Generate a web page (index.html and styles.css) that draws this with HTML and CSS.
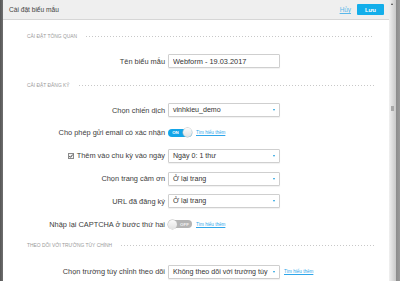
FILE: index.html
```html
<!DOCTYPE html>
<html lang="vi">
  <head>
    <meta charset="UTF-8" />
    <meta name="viewport" content="width=device-width, initial-scale=1.0" />
    <title>Cài đặt biểu mẫu</title>
    <link rel="stylesheet" href="styles.css">
  </head>
  <body>
    <div class="screen">
      <div class="dialog">
        <div class="dialog-header">
          <span class="dialog-title">Cài đặt biểu mẫu</span>
          <a href="#" class="cancel-link">Hủy</a>
          <button class="save-button">Lưu</button>
        </div>

        <div class="dialog-body">
          <div class="section-title first">
            <span>CÀI ĐẶT TỔNG QUAN</span>
            <span class="dots"></span>
          </div>
          <div class="row single">
            <label class="label">Tên biểu mẫu</label>
            <input class="field" value="Webform - 19.03.2017">
          </div>

          <div class="section-title">
            <span>CÀI ĐẶT ĐĂNG KÝ</span>
            <span class="dots"></span>
          </div>
          <div class="rows">
            <div class="row">
              <label class="label">Chọn chiến dịch</label>
              <div class="select">vinhkieu_demo<span class="arrow"></span></div>
            </div>
            <div class="row">
              <label class="label">Cho phép gửi email có xác nhận</label>
              <span class="toggle on"><span class="toggle-text">ON</span><span class="knob"></span></span>
              <a href="#" class="more-link">Tìm hiểu thêm</a>
            </div>
            <div class="row">
              <label class="label">
                <svg class="check" width="6" height="6" viewBox="0 0 6 6">
                  <rect x="0.5" y="0.5" width="5" height="5" fill="#f4f4f4" stroke="#8a8a8a"/>
                  <path d="M1.3 3 L2.5 4.3 L4.8 1.5" fill="none" stroke="#333" stroke-width="0.9"/>
                </svg>
                Thêm vào chu kỳ vào ngày
              </label>
              <div class="select">Ngày 0: 1 thư<span class="arrow"></span></div>
            </div>
            <div class="row">
              <label class="label">Chọn trang cảm ơn</label>
              <div class="select">Ở lại trang<span class="arrow"></span></div>
            </div>
            <div class="row">
              <label class="label">URL đã đăng ký</label>
              <div class="select">Ở lại trang<span class="arrow"></span></div>
            </div>
            <div class="row">
              <label class="label">Nhập lại CAPTCHA ở bước thứ hai</label>
              <span class="toggle off"><span class="knob"></span><span class="toggle-text">OFF</span></span>
              <a href="#" class="more-link">Tìm hiểu thêm</a>
            </div>
          </div>

          <div class="section-title third">
            <span>THEO DÕI VỚI TRƯỜNG TÙY CHỈNH</span>
            <span class="dots"></span>
          </div>
          <div class="row last">
            <label class="label">Chọn trường tùy chỉnh theo dõi</label>
            <div class="select">Không theo dõi với trường tùy<span class="arrow"></span></div>
            <a href="#" class="more-link">Tìm hiểu thêm</a>
          </div>
        </div>
      </div>

      <div class="scrollbar">
        <span class="scroll-arrow"></span>
        <span class="scroll-thumb"></span>
      </div>
    </div>
  </body>
</html>
```

FILE: styles.css
```css
body{
  margin: 0;
  background-color: rgb(110, 110, 110);
  font-family: "Liberation Sans", Arial, sans-serif;
  color: #333;
  overflow: hidden;
}
.screen{
  display: flex;
  height: 281px;
  padding-left: 3px;
  background: linear-gradient(to right, #555 0px, #707070 3px, #8c8c8c 396px, #9a9a9a 400px);
}
.dialog{
  width: 386px;
  background-color: white;
}
.dialog-header{
  display: flex;
  align-items: center;
  height: 19px;
  padding: 0 5px 0 6px;
  background-color: #efefef;
  border-bottom: 1px solid #d6d6d6;
}
.dialog-title{
  flex: 1;
  font-size: 6.6px;
  color: #444;
}
.cancel-link{
  font-size: 6.4px;
  color: #5ab8ea;
  margin-right: 6px;
}
.save-button{
  width: 27px;
  height: 11px;
  padding: 0;
  border: none;
  border-radius: 1px;
  background-color: #13aeea;
  color: white;
  font-family: "Liberation Sans", Arial, sans-serif;
  font-size: 5.6px;
  font-weight: bold;
}
.dialog-body{
  padding: 0 15px 0 24px;
}
.section-title{
  display: flex;
  align-items: center;
  height: 10px;
  margin-top: 8px;
  font-size: 4.9px;
  color: #9a9a9a;
}
.section-title.first{
  margin-top: 11px;
}
.section-title.third{
  margin-top: 5px;
}
.dots{
  flex: 1;
  height: 1px;
  margin-left: 9px;
  background-image: linear-gradient(to right, #c8c8c8 1px, transparent 1px);
  background-size: 3px 1px;
  background-repeat: repeat-x;
}
.rows{
  margin-top: 8px;
}
.row{
  display: flex;
  align-items: center;
  height: 22.8px;
}
.row.single{
  margin-top: 9px;
}
.row.last{
  margin-top: 10px;
}
.label{
  width: 138px;
  margin-right: 3px;
  text-align: right;
  font-size: 7.4px;
  color: #3c3c3c;
  white-space: nowrap;
}
.check{
  vertical-align: -0.5px;
  margin-right: 1px;
}
.field,
.select{
  box-sizing: border-box;
  width: 112px;
  height: 14px;
  padding: 0 0 0 4px;
  border: 1px solid #cfcfcf;
  border-radius: 1px;
  box-shadow: 0 1px 1px rgba(0, 0, 0, 0.06);
  background-color: white;
  font-family: "Liberation Sans", Arial, sans-serif;
  font-size: 7.4px;
  color: #333;
}
.select{
  position: relative;
  display: flex;
  align-items: center;
  padding-right: 10px;
  font-size: 7.1px;
  white-space: nowrap;
  overflow: hidden;
}
.arrow{
  position: absolute;
  right: 4px;
  top: 5px;
  border-left: 1.5px solid transparent;
  border-right: 1.5px solid transparent;
  border-top: 2px solid #1c9ee0;
}
.toggle{
  position: relative;
  display: flex;
  align-items: center;
  width: 24px;
  height: 8px;
  border-radius: 4px;
  font-size: 4.4px;
  font-weight: bold;
}
.toggle.on{
  background-color: #13a5e8;
  color: white;
}
.toggle.off{
  background-color: #b4b4b4;
  color: #f2f2f2;
}
.toggle-text{
  flex: 1;
  text-align: center;
}
.knob{
  width: 9px;
  height: 9px;
  border-radius: 50%;
  background: linear-gradient(#fbfbfb, #e2e2e2);
  box-shadow: 0 0 0 0.5px #b8b8b8;
}
.more-link{
  margin-left: 4px;
  font-size: 4.6px;
  color: #2fa6ea;
}
.scrollbar{
  position: relative;
  width: 7px;
  background: linear-gradient(to right, #f0f0f0, #d8d8d8 60%, #c9c9c9);
}
.scroll-arrow{
  position: absolute;
  left: 2px;
  top: 3px;
  border-left: 1.5px solid transparent;
  border-right: 1.5px solid transparent;
  border-bottom: 2px solid #444;
}
.scroll-thumb{
  position: absolute;
  left: 2px;
  top: 106px;
  width: 3px;
  height: 5px;
  background-color: #a8a8a8;
}
```
